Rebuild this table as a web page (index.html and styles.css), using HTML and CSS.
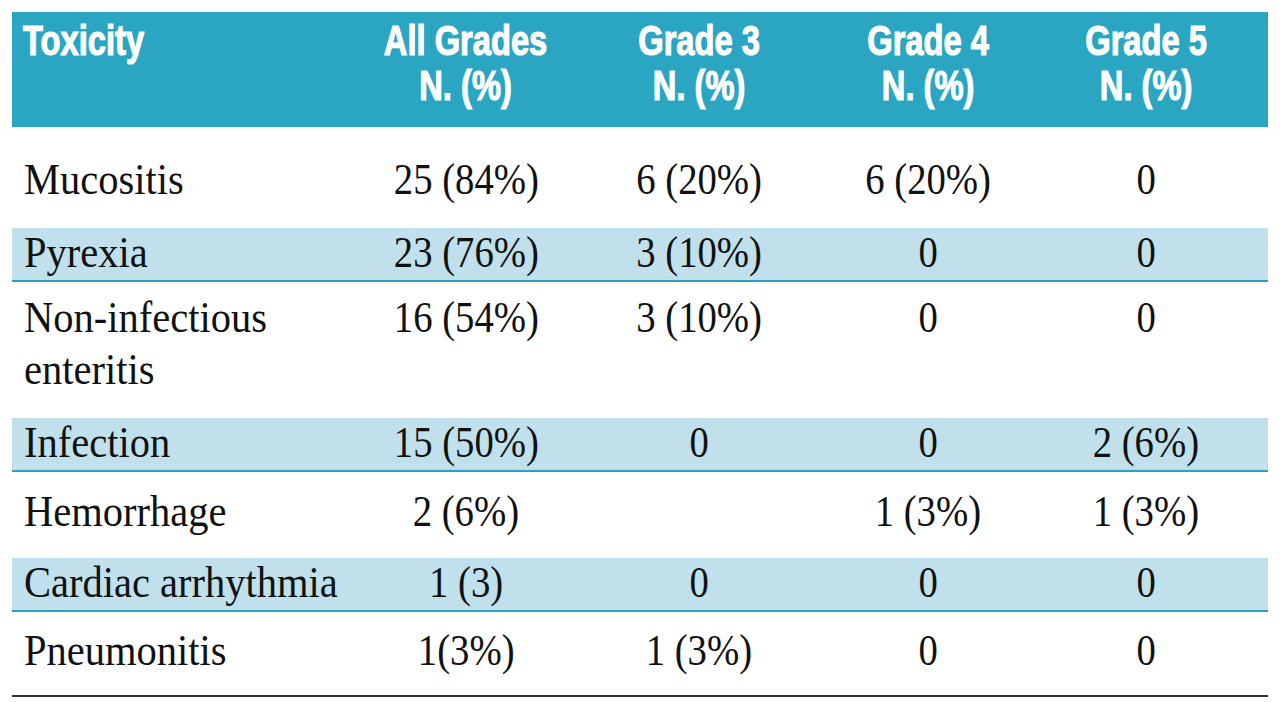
FILE: index.html
```html
<!DOCTYPE html>
<html lang="en">
<head>
<meta charset="utf-8">
<title>Toxicity table</title>
<link rel="stylesheet" href="styles.css">
</head>
<body>
<table class="tox">
  <colgroup>
    <col class="w1"><col class="w2"><col class="w3"><col class="w4"><col class="w5">
  </colgroup>
  <thead>
    <tr>
      <th class="left"><span class="hd">Toxicity</span></th>
      <th><span class="hd">All Grades<br>N. (%)</span></th>
      <th><span class="hd">Grade 3<br>N. (%)</span></th>
      <th><span class="hd">Grade 4<br>N. (%)</span></th>
      <th class="last"><span class="hd">Grade 5<br>N. (%)</span></th>
    </tr>
  </thead>
  <tbody>
    <tr class="plain first">
      <td class="left"><span class="tx">Mucositis</span></td>
      <td><span class="num">25 (84%)</span></td>
      <td><span class="num">6 (20%)</span></td>
      <td><span class="num">6 (20%)</span></td>
      <td class="last"><span class="num">0</span></td>
    </tr>
    <tr class="shade">
      <td class="left"><span class="tx">Pyrexia</span></td>
      <td><span class="num">23 (76%)</span></td>
      <td><span class="num">3 (10%)</span></td>
      <td><span class="num">0</span></td>
      <td class="last"><span class="num">0</span></td>
    </tr>
    <tr class="plain double">
      <td class="left"><span class="tx">Non-infectious<br>enteritis</span></td>
      <td><span class="num">16 (54%)</span></td>
      <td><span class="num">3 (10%)</span></td>
      <td><span class="num">0</span></td>
      <td class="last"><span class="num">0</span></td>
    </tr>
    <tr class="shade">
      <td class="left"><span class="tx">Infection</span></td>
      <td><span class="num">15 (50%)</span></td>
      <td><span class="num">0</span></td>
      <td><span class="num">0</span></td>
      <td class="last"><span class="num">2 (6%)</span></td>
    </tr>
    <tr class="plain">
      <td class="left"><span class="tx">Hemorrhage</span></td>
      <td><span class="num">2 (6%)</span></td>
      <td></td>
      <td><span class="num">1 (3%)</span></td>
      <td class="last"><span class="num">1 (3%)</span></td>
    </tr>
    <tr class="shade">
      <td class="left"><span class="tx">Cardiac arrhythmia</span></td>
      <td><span class="num">1 (3)</span></td>
      <td><span class="num">0</span></td>
      <td><span class="num">0</span></td>
      <td class="last"><span class="num">0</span></td>
    </tr>
    <tr class="plain final">
      <td class="left"><span class="tx">Pneumonitis</span></td>
      <td><span class="num">1(3%)</span></td>
      <td><span class="num">1 (3%)</span></td>
      <td><span class="num">0</span></td>
      <td class="last"><span class="num">0</span></td>
    </tr>
  </tbody>
</table>
</body>
</html>
```

FILE: styles.css
```css
html, body {
  margin: 0;
  padding: 0;
  background: #ffffff;
}

.tox {
  margin: 12px 0 0 12px;
  width: 1256px;
  table-layout: fixed;
  border-collapse: collapse;
  border-spacing: 0;
}

.w1 { width: 342px; }
.w2 { width: 224px; }
.w3 { width: 242px; }
.w4 { width: 216px; }
.w5 { width: 232px; }

.tox th {
  background: #2aa6c3;
  color: #ffffff;
  font-family: "Liberation Sans", Arial, sans-serif;
  font-weight: 700;
  font-size: 43px;
  line-height: 45px;
  padding: 6px 0 19px 0;
  text-align: center;
  vertical-align: top;
}

.tox th.left {
  text-align: left;
  padding-left: 11px;
}

.tox .last {
  padding-right: 12px;
}

.hd {
  display: inline-block;
  transform: scaleX(0.76);
  -webkit-text-stroke: 1.2px #ffffff;
  white-space: nowrap;
}

.left .hd,
.left .tx {
  transform-origin: left center;
}

.tox td {
  font-family: "Liberation Serif", "Times New Roman", serif;
  font-size: 45px;
  line-height: 52px;
  color: #111111;
  text-align: center;
  vertical-align: top;
  padding: 13px 0 21px 0;
}

.tox td.left {
  text-align: left;
  padding-left: 12px;
}

.tx {
  display: inline-block;
  transform: scaleX(0.9);
  white-space: nowrap;
}

.num {
  display: inline-block;
  transform: scaleX(0.86);
  white-space: nowrap;
}

.tox tr.first td {
  padding-top: 26px;
  padding-bottom: 23px;
}

.tox tr.double td {
  padding-top: 9px;
  padding-bottom: 23px;
}

.tox tr.shade td {
  background: #c0e1eb;
  line-height: 48px;
  padding-top: 0;
  padding-bottom: 4px;
  border-bottom: 2px solid #2b9fc0;
}

.tox tr.final td {
  padding-top: 12px;
  padding-bottom: 19px;
  border-bottom: 2px solid #333333;
}
```
